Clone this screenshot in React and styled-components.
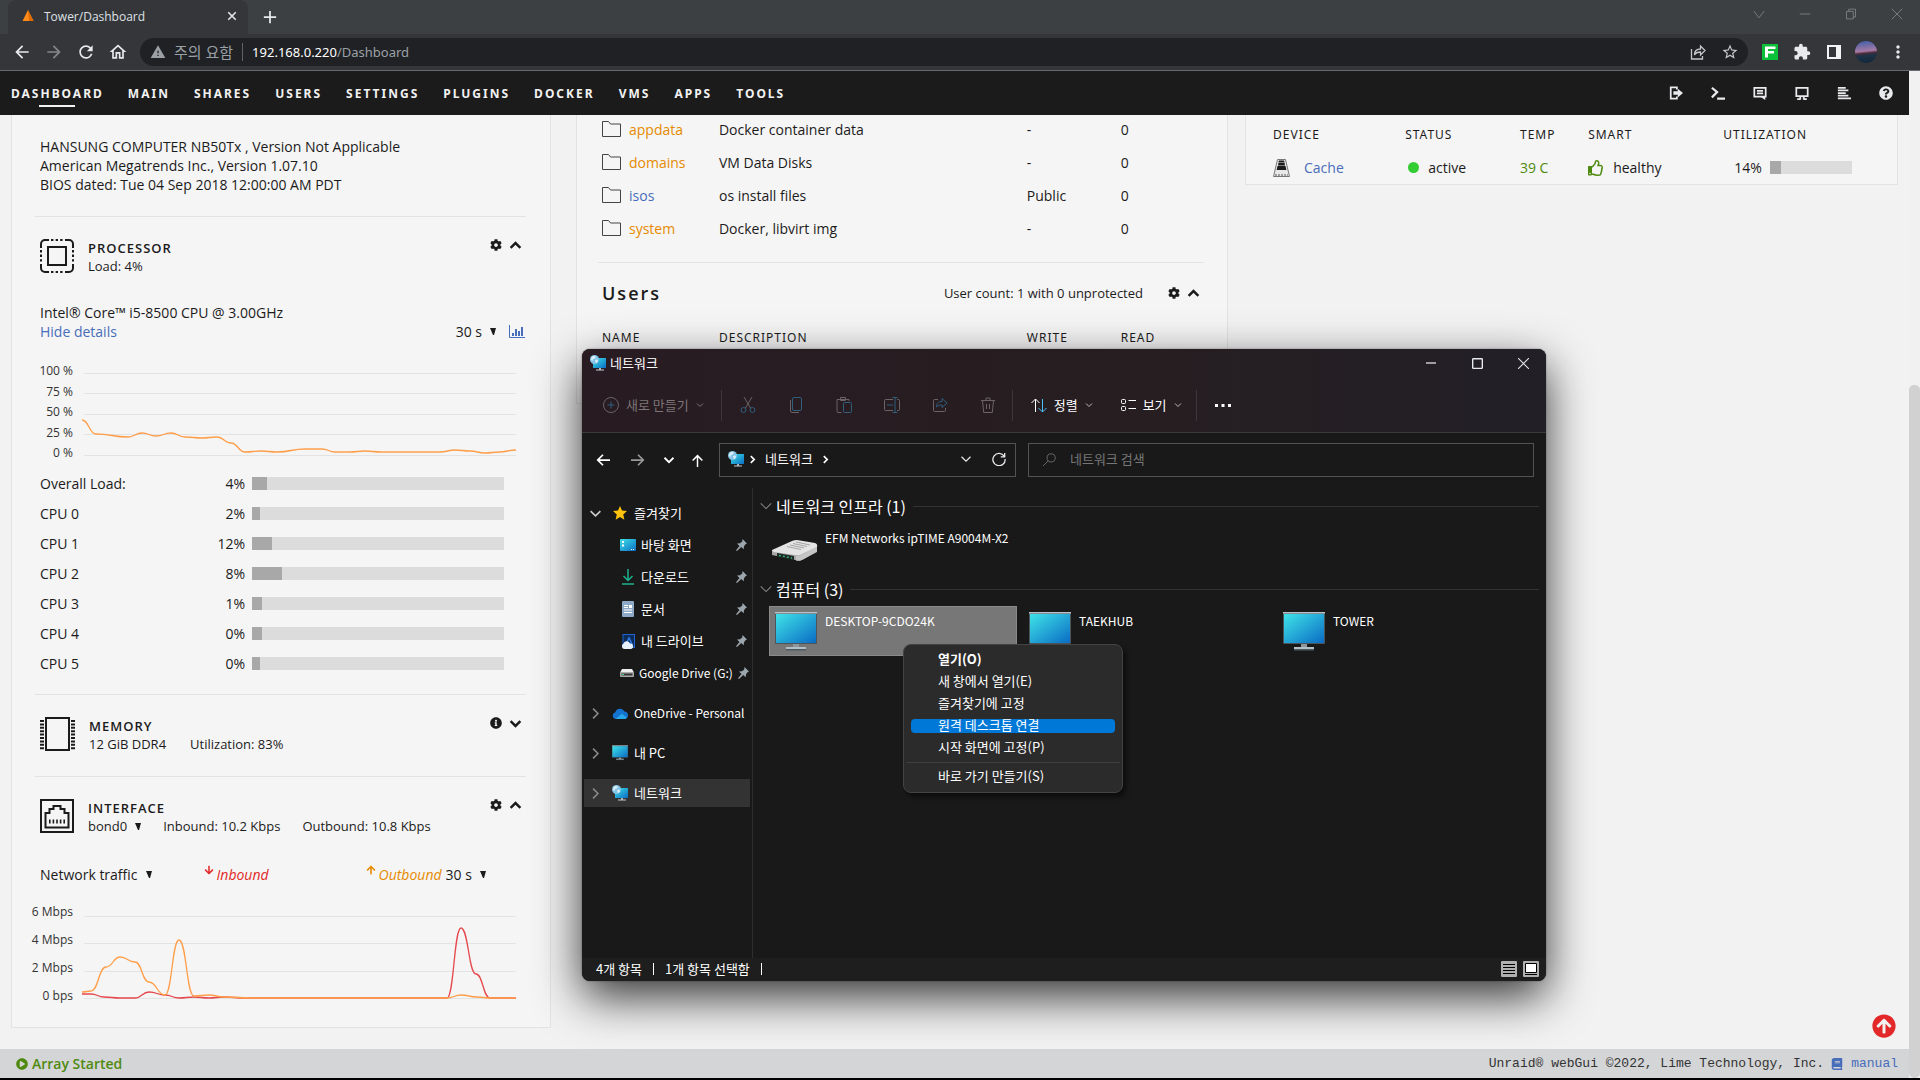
import React, { useState } from 'react'
import styled, { createGlobalStyle, css } from 'styled-components'
import { MdArrowBack, MdArrowForward, MdRefresh, MdOutlineHome, MdWarning, MdStarBorder, MdExtension, MdMoreVert } from 'react-icons/md'
import { FaPlayCircle, FaArrowUp, FaArrowDown, FaRegThumbsUp, FaInfoCircle, FaCog, FaQuestionCircle, FaBook, FaArrowCircleUp } from 'react-icons/fa'

const korean = '"Noto Sans CJK KR", "Noto Sans", sans-serif'

const GlobalStyle = createGlobalStyle`
  * {
    box-sizing: border-box;
  }
  body {
    margin: 0;
    background: #f2f2f2;
    font-family: "Open Sans", "Noto Sans CJK KR", sans-serif;
    font-size: 14px;
    color: #1c1b1b;
  }
  button, input, select {
    font: inherit;
    color: inherit;
    background: none;
    border: none;
    padding: 0;
    margin: 0;
  }
  a {
    color: #486dba;
    text-decoration: none;
  }
  svg {
    display: block;
    flex: none;
  }
`

/* ---------- browser ---------- */

const Browser = styled.div`
  position: relative;
  display: flex;
  flex-direction: column;
  height: 100vh;
  overflow: hidden;
  border-bottom: 2px solid #000;
`
const TabStrip = styled.div`
  display: flex;
  height: 34px;
  padding-left: 8px;
  background: #3c4043;
`
const Tab = styled.div`
  display: flex;
  align-items: center;
  gap: 9px;
  width: 240px;
  padding: 0 10px 2px 13px;
  border-radius: 8px 8px 0 0;
  background: #35363a;
  color: #dfe1e5;
  font: 12px "Open Sans", "Noto Sans", sans-serif;
`
const TabTitle = styled.span`
  flex: 1;
`
const PlainButton = styled.button`
  display: flex;
  align-items: center;
  justify-content: center;
  width: ${(props) => props.$width || 16}px;
  color: ${(props) => props.$color || '#e8eaed'};
`
const WindowButtons = styled.div`
  display: flex;
  height: 28px;
  margin-left: auto;
`
const Toolbar = styled.div`
  display: flex;
  align-items: center;
  height: 37px;
  padding: 0 6px;
  background: #35363a;
  border-bottom: 1px solid #68696d;
`
const Omnibox = styled.div`
  display: flex;
  align-items: center;
  flex: 1;
  height: 28px;
  margin: 0 6px;
  padding: 0 2px 0 10px;
  border-radius: 14px;
  background: #202124;
  color: #9aa0a6;
`
const SiteWarning = styled.span`
  margin-left: 8px;
  padding-right: 9px;
  border-right: 1px solid #5f6368;
  font-size: 15px;
  line-height: 18px;
`
const Url = styled.span`
  flex: 1;
  margin-left: 9px;
  font-family: "Noto Sans", sans-serif;
  font-size: 13px;
  b {
    font-weight: 400;
    color: #fff;
  }
`

/* ---------- unraid page ---------- */

const Viewport = styled.div`
  position: relative;
  display: flex;
  flex: 1;
  min-height: 0;
`
const Page = styled.div`
  display: flex;
  flex-direction: column;
  flex: 1;
  min-width: 0;
`
const ScrollTrack = styled.div`
  width: 11px;
  padding-top: 314px;
  background: #f1f1f1;
`
const ScrollThumb = styled.div`
  height: 100%;
  border-radius: 5px;
  background: #d1d1d1;
`
const NavBar = styled.nav`
  display: flex;
  align-items: center;
  gap: 24px;
  height: 44px;
  flex: none;
  padding: 0 2px 0 11px;
  background: #1c1b1b;
`
const NavLink = styled.a`
  position: relative;
  color: #f2f2f2;
  font-family: "Noto Sans", sans-serif;
  font-size: 12px;
  font-weight: 700;
  letter-spacing: 2px;
  ${(props) => props.$active && css`
    &::after {
      content: "";
      position: absolute;
      left: 50%;
      bottom: -5px;
      width: 36px;
      height: 2px;
      margin-left: -18px;
      background: #f2f2f2;
    }
  `}
`
const NavTools = styled.div`
  display: flex;
  margin-left: auto;
`
const Columns = styled.main`
  display: grid;
  grid-template-columns: 548fr 652fr 653fr;
  gap: 17px;
  align-items: start;
  flex: 1;
  min-height: 0;
  padding: 0 11px;
  overflow: hidden;
`
const Card = styled.section`
  border: 1px solid #e3e3e3;
  border-top: none;
  background: #f5f5f5;
`
const SystemCard = styled(Card)`
  margin-right: 8px;
  padding: 0 24px 0 23px;
`
const SharesCard = styled(Card)`
  padding: 0 23px 56px 21px;
`
const CacheCard = styled(Card)`
  padding: 9px 26px 0 27px;
`
const Section = styled.div`
  padding: 22px 0 ${(props) => props.$bottom || 22}px;
  border-bottom: 1px solid #e3e3e3;
  &:last-child {
    border-bottom: none;
  }
`
const Line = styled.div`
  display: flex;
  align-items: center;
  height: 19px;
  padding: 0 1px 0 5px;
`
const SectionHead = styled.header`
  display: flex;
  gap: 14px;
  padding: 0 0 0 5px;
`
const HeadText = styled.div`
  flex: 1;
  line-height: 18px;
`
const HeadTitle = styled.h3`
  margin: 0;
  font-size: 13px;
  font-weight: 600;
  letter-spacing: 1px;
  text-transform: uppercase;
`
const HeadInfo = styled.div`
  display: flex;
  gap: ${(props) => props.$gap || 0}px;
  font-size: 13px;
`
const HeadTools = styled.div`
  display: flex;
  gap: 2px;
  height: 12px;
  padding-right: 2px;
`
const Spacer = styled.div`
  height: ${(props) => props.$size}px;
`
const PickerLabel = styled.label`
  display: flex;
  align-items: center;
  gap: 8px;
  select {
    appearance: none;
    field-sizing: content;
  }
`
const PeriodPicker = styled.span`
  margin-right: 13px;
`
const DetailsLink = styled.a`
  flex: 1;
`
const ChartBox = styled.div`
  display: flex;
  gap: 9px;
  height: ${(props) => props.$height}px;
  margin-right: 10px;
`
const AxisLabels = styled.div`
  display: flex;
  flex-direction: column;
  justify-content: space-between;
  align-items: flex-end;
  width: 38px;
  font-size: 12px;
  line-height: 20px;
  color: #333;
  white-space: nowrap;
`
const ChartSvg = styled.svg`
  flex: 1;
  min-width: 0;
  height: 100%;
  overflow: visible;
`
const LoadRow = styled.div`
  display: flex;
  align-items: center;
  height: 30px;
  padding: 0 22px 0 5px;
`
const LoadName = styled.span`
  width: 105px;
`
const LoadValue = styled.span`
  width: 100px;
  margin-right: 7px;
  text-align: right;
`
const Meter = styled.div`
  flex: 1;
  height: 13px;
  background: #dcdcdc;
`
const MeterFill = styled.div`
  height: 100%;
  background: #a8a8a8;
`
const TrafficLegend = styled.em`
  display: flex;
  gap: 3px;
  margin-left: ${(props) => props.$left}px;
  margin-right: 4px;
  color: ${(props) => props.$color};
`
const Table = styled.table`
  width: 100%;
  margin-top: ${(props) => props.$top || 0}px;
  border-collapse: collapse;
  table-layout: fixed;
  th, td {
    padding: 0 0 0 ${(props) => props.$indent || 0}px;
    height: ${(props) => props.$rowHeight}px;
    text-align: left;
    font-weight: 400;
  }
  th {
    height: 20px;
    font-family: "Noto Sans", sans-serif;
    font-size: 12px;
    letter-spacing: 1px;
  }
`
const ShareName = styled.div`
  display: flex;
  align-items: center;
  gap: 8px;
`
const ShareLink = styled.a`
  color: ${(props) => (props.$public ? '#486dba' : '#e68a00')};
`
const UsersHead = styled.header`
  display: flex;
  align-items: center;
  height: 26px;
  margin-top: 17px;
  h2 {
    flex: 1;
    margin: 0;
    padding-left: 4px;
    font-size: 18px;
    font-weight: 600;
    letter-spacing: 2px;
  }
`
const UsersCount = styled.span`
  margin-right: 22px;
  font-size: 13px;
`
const Rule = styled.hr`
  height: 1px;
  margin: 17px 0 0;
  border: none;
  background: #e3e3e3;
`
const Cell = styled.div`
  display: flex;
  align-items: center;
  gap: ${(props) => props.$gap || 9}px;
  padding: 7px 0 0 ${(props) => props.$left || 0}px;
  color: ${(props) => props.$color || 'inherit'};
  white-space: nowrap;
`
const Dot = styled.span`
  width: 11px;
  height: 11px;
  margin-left: 3px;
  border-radius: 50%;
  background: #33cc33;
`
const CacheMeter = styled(Meter)`
  flex: none;
  width: 82px;
`
const Footer = styled.footer`
  display: flex;
  align-items: center;
  height: 29px;
  flex: none;
  padding: 0 11px 0 16px;
  background: #d4d5d6;
`
const ArrayState = styled.strong`
  display: flex;
  align-items: center;
  gap: 4px;
  flex: 1;
  color: #4f8a10;
  font-weight: 600;
`
const Copyright = styled.span`
  display: flex;
  align-items: center;
  gap: 7px;
  color: #333;
  font-family: "Liberation Mono", monospace;
  font-size: 13px;
  a {
    display: flex;
    align-items: center;
    gap: 8px;
  }
`
const BackToTop = styled.a`
  position: absolute;
  right: 24px;
  bottom: 40px;
  color: #e22828;
`

/* ---------- explorer window ---------- */

const Explorer = styled.div`
  position: absolute;
  left: 582px;
  top: 349px;
  display: flex;
  flex-direction: column;
  width: 964px;
  height: 632px;
  border-radius: 8px;
  background: #191919;
  color: #fff;
  font: 13px/18px ${korean};
  box-shadow: 0 0 2px rgba(0, 0, 0, 0.4), 0 16px 46px rgba(0, 0, 0, 0.78);
`
const ExplorerTop = styled.div`
  border-radius: 8px 8px 0 0;
  border-bottom: 1px solid #3a3a3a;
  background: linear-gradient(90deg, #281c22, #261e21 60%, #221f27);
`
const TitleBar = styled.div`
  display: flex;
  align-items: center;
  gap: 4px;
  height: 29px;
  padding: 0 0 1px 8px;
`
const TitleButtons = styled.div`
  display: flex;
  height: 100%;
  margin-left: auto;
`
const CommandBar = styled.div`
  display: flex;
  align-items: center;
  height: 54px;
`
const Command = styled.button`
  display: flex;
  align-items: center;
  gap: 7px;
  padding: 0 ${(props) => props.$right}px 0 ${(props) => props.$left}px;
  color: ${(props) => (props.$dim ? '#7d7577' : '#fff')};
`
const CommandDivider = styled.span`
  width: 1px;
  height: 31px;
  margin-right: 2px;
  background: #3d3538;
`
const LocationBar = styled.div`
  display: flex;
  align-items: center;
  height: 55px;
  padding: 0 12px 1px 4px;
`
const AddressBox = styled.div`
  display: flex;
  align-items: center;
  flex: 299;
  height: 34px;
  margin: 0 12px 0 7px;
  padding: 0 4px 2px 8px;
  border: 1px solid #535353;
`
const Crumb = styled.span`
  margin: 0 8px;
`
const CrumbSpace = styled.span`
  flex: 1;
`
const SearchBox = styled.label`
  display: flex;
  align-items: center;
  gap: 14px;
  flex: 503;
  height: 34px;
  padding: 0 14px 2px;
  border: 1px solid #535353;
  color: #777;
  input {
    flex: 1;
    outline: none;
  }
  input::placeholder {
    color: #777;
  }
`
const ExplorerBody = styled.div`
  display: flex;
  flex: 1;
  min-height: 0;
`
const Tree = styled.aside`
  width: 171px;
  padding: 11px 2px 0;
  border-right: 1px solid #2e2e2e;
`
const TreeItem = styled.button`
  display: flex;
  align-items: center;
  gap: ${(props) => (props.$child ? 5 : 6)}px;
  width: 100%;
  height: 28px;
  margin-bottom: ${(props) => (props.$spaced ? 12 : 4)}px;
  padding: 0 3px 0 ${(props) => (props.$child ? 36 : 5)}px;
  background: ${(props) => (props.$selected ? '#333' : 'none')};
  white-space: nowrap;
`
const TreeIcon = styled.span`
  display: flex;
  justify-content: center;
  width: 16px;
`
const TreeArrow = styled.span`
  display: flex;
  width: 14px;
  margin-right: 3px;
`
const TreeText = styled.span`
  flex: 1;
  text-align: left;
  font-size: ${(props) => (props.$latin ? 12 : 13)}px;
`
const Files = styled.div`
  flex: 1;
  padding: 7px 7px 0 6px;
`
const GroupHead = styled.h2`
  display: flex;
  align-items: center;
  gap: 3px;
  height: 22px;
  margin: 0 0 6px;
  font-size: 16px;
  font-weight: 400;
  &::after {
    content: "";
    flex: 1;
    height: 1px;
    margin-left: 4px;
    background: #333;
  }
`
const Tiles = styled.div`
  display: grid;
  grid-template-columns: repeat(auto-fill, 248px);
  gap: 6px;
  margin: 0 0 5px 10px;
`
const Tile = styled.button`
  display: flex;
  align-items: flex-start;
  gap: 8px;
  height: 50px;
  padding: 5px;
  border: 1px solid ${(props) => (props.$selected ? '#8a8a8a' : 'transparent')};
  background: ${(props) => (props.$selected ? '#777' : 'none')};
  font-size: 12px;
  white-space: nowrap;
`
const StatusBar = styled.div`
  display: flex;
  align-items: center;
  height: 23px;
  padding: 0 7px 1px 14px;
  border-radius: 0 0 8px 8px;
  background: #1e1e1e;
`
const StatusText = styled.span`
  margin-right: 11px;
  padding-right: 11px;
  border-right: 1px solid #fff;
  line-height: 12px;
`
const ViewButtons = styled.div`
  display: flex;
  gap: 6px;
  margin-left: auto;
`
const ContextMenu = styled.div`
  position: absolute;
  left: 321px;
  top: 295px;
  display: flex;
  flex-direction: column;
  gap: 8px;
  width: 220px;
  padding: 8px 2px;
  border: 1px solid #434343;
  border-radius: 8px;
  background: #2b2b2b;
  box-shadow: 3px 4px 5px rgba(0, 0, 0, 0.5);
  hr {
    width: 100%;
    height: 1px;
    margin: -1px 0;
    border: none;
    background: #404040;
  }
`
const MenuItem = styled.button`
  height: 14px;
  margin: 0 5px;
  padding: 0 0 2px 27px;
  border-radius: 4px;
  background: ${(props) => (props.$active ? '#0078d7' : 'none')};
  font-weight: ${(props) => (props.$bold ? 700 : 400)};
  line-height: 12px;
  text-align: left;
`

/* ---------- icons ---------- */

const Stroke = ({ size = 16, width = 1, children, ...rest }) => (
  <svg width={size} height={size} viewBox="0 0 16 16" fill="none" stroke="currentColor" strokeWidth={width} {...rest}>
    {children}
  </svg>
)
const Chevron = ({ size = 8, turn = 0, width = 2, ...rest }) => (
  <Stroke size={size} width={width} {...rest}>
    <path d="M2 5l6 6 6-6" transform={`rotate(${turn} 8 8)`} />
  </Stroke>
)
const Triangle = () => (
  <svg width="6" height="7" viewBox="0 0 6 7"><path d="M0 0h6L4 7H3z" fill="#1c1b1b" /></svg>
)
const CpuIcon = () => (
  <svg width="34" height="34" viewBox="0 0 34 34" fill="none" stroke="#1c1b1b" strokeWidth="2">
    <path d="M1 9V5a4 4 0 0 1 4-4h4M25 1h4a4 4 0 0 1 4 4v4M33 25v4a4 4 0 0 1-4 4h-4M9 33H5a4 4 0 0 1-4-4v-4" />
    <path d="M11 1h12M11 33h12M1 11v12M33 11v12" strokeDasharray="2.4 2.2" />
    <rect x="8" y="8" width="18" height="18" />
  </svg>
)
const MemoryIcon = () => (
  <svg width="35" height="34" viewBox="0 0 35 34" fill="none" stroke="#1c1b1b" strokeWidth="2">
    <rect x="6" y="1" width="23" height="32" />
    <path d="M2 3v30M33 3v30" strokeWidth="4" strokeDasharray="2 1.4" />
  </svg>
)
const PortIcon = () => (
  <svg width="34" height="34" viewBox="0 0 34 34" fill="none" stroke="#1c1b1b" strokeWidth="2">
    <rect x="1" y="1" width="32" height="32" />
    <path d="M5.5 28.500V14h4v-4h4V7h7v3h4v4h4v14.500z" />
    <path d="M9 22.500h16" strokeWidth="4" strokeDasharray="1.600 2" />
  </svg>
)
const ChartIcon = () => (
  <svg width="16" height="13" viewBox="0 0 16 13" fill="none" stroke="#486dba">
    <path d="M.5 0v12.500H16" />
    <path d="M4 11V8M7 11V4M10 11V6M13 11V2" strokeWidth="2" />
  </svg>
)
const FolderIcon = () => (
  <svg width="19" height="17" viewBox="0 0 19 17" fill="none" stroke="#444">
    <path d="M.5 15.500V.5h6l2 2.500h10v12.500z" />
  </svg>
)
const DriveIcon = () => (
  <svg width="17" height="18" viewBox="0 0 17 18">
    <path d="M4.500.5h8l4 17H.5z" fill="#e8e8e8" stroke="#777" />
    <path d="M6 1.500h5l.5 1.500h-6zM5.500 3.500h6l.5 3H5zM4.500 7h8l.9 4H3.600z" fill="#1c1b1b" />
    <path d="M2 16h13" stroke="#555" strokeDasharray="2 1" />
  </svg>
)
const MonitorIcon = ({ width = 42, height = 40 }) => (
  <svg width={width} height={height} viewBox="0 0 42 40">
    <defs>
      <linearGradient id="screen" x1="0" y1="0" x2="1" y2="1">
        <stop offset="0" stopColor="#3fe3e8" />
        <stop offset="1" stopColor="#0a6cc4" />
      </linearGradient>
    </defs>
    <path d="M18 32h6v4h-6z" fill="#8d979e" />
    <path d="M11 35h20v3H11z" fill="#b5bfc6" />
    <path d="M11 37h20v1.500H11z" fill="#4e5a62" />
    <rect x="0" y="0" width="42" height="32" rx="1" fill="#4d555c" />
    <path d="M0 0h42v1.500H0z" fill="#b9c2c9" />
    <rect x="1" y="2" width="40" height="29" fill="url(#screen)" />
  </svg>
)
const NetworkIcon = () => (
  <svg width="16" height="16" viewBox="0 0 16 16">
    <path d="M9 12h2v3H9z" fill="#a6b1b9" />
    <path d="M6 14.500h8v1H6z" fill="#c5cdd3" />
    <rect x="3" y="3" width="13" height="10" fill="url(#screen)" />
    <circle cx="4.500" cy="4.500" r="4.500" fill="#86c4e6" />
    <path d="M1.500 2C3 .5 5 .8 6 1.800L4.800 3.500 3 4 2.500 6 1 5zM5 5l2.500-.5.5 2-2 1.800z" fill="#d8f0fa" />
  </svg>
)
const RouterIcon = () => (
  <svg width="42" height="38" viewBox="0 0 42 38" overflow="visible">
    <g transform="translate(-3 11)">
      <path d="M0 10v5l28 6 17-9V7z" fill="#a9a9a9" />
      <path d="M0 10L20 1q2-1 5-1l18 3q3 1 2 4L30 14q-3 2-7 1L2 12q-2-1-2-2z" fill="#e4e4e4" />
      <path d="M18 5l14 3M21 3.500l14 3M24 2l14 3M15 6.500l14 3" stroke="#a5a5a5" />
      <path d="M5 13l17 3v4L5 17z" fill="#1b2a26" />
      <path d="M7 15.500l13 2.500" stroke="#3fae72" strokeWidth="1.500" strokeDasharray="2 2" />
      <path d="M24 20.500V16q4 0 7-2l14-7v4.500L31 19.500q-3 1.500-7 1z" fill="#c4c4c4" />
    </g>
  </svg>
)
const PinIcon = () => (
  <svg width="11" height="12" viewBox="0 0 11 12" fill="#9aa5ad">
    <path d="M6.500 0L11 4.500l-1.500.8-1.500 2-.3 3L5.200 8 1 12l-1-.8L3.500 7 1 4.500l3-.3 2.200-1.700z" />
  </svg>
)
const treeIcons = {
  star: <svg width="14" height="14" viewBox="0 0 16 16"><path d="M8 0l2.300 5.200 5.700.6-4.300 3.800 1.300 6L8 12.600 3 15.600l1.300-6L0 5.800l5.700-.6z" fill="#ffc20e" /></svg>,
  desktop: <svg width="16" height="12" viewBox="0 0 16 12"><rect width="16" height="12" rx="1" fill="url(#screen)" /><path d="M2 2h2v2H2zM2 5.500h2v2H2zM11 10h1v1h-1zM13 10h1v1h-1z" fill="#fff" /></svg>,
  download: <svg width="12" height="16" viewBox="0 0 12 16" fill="none" stroke="#1cb28c" strokeWidth="1.500"><path d="M6 0v11.500M1.500 7L6 11.500 10.500 7M0 15h12" /></svg>,
  document: <svg width="12" height="16" viewBox="0 0 12 16"><rect width="12" height="16" rx="1" fill="#8ea9c6" /><path d="M2 4h4v1H2zM2 6h4v1H2zM7 4h3v3H7zM2 8.500h8v1H2zM2 11h8v1H2z" fill="#fff" /></svg>,
  drive: <svg width="14" height="15" viewBox="0 0 14 15"><rect x="2" y=".5" width="11.500" height="13" fill="#0d2b57" stroke="#1f63d0" /><path d="M5 10l3-6 3 6z" fill="none" stroke="#2f7be8" strokeWidth="1.500" /><path d="M3 15a3 3 0 0 1-.5-5.500 3.500 3.500 0 0 1 6.500 0A2.800 2.800 0 0 1 10 15z" fill="#e7f1ff" /></svg>,
  disk: <svg width="14" height="8" viewBox="0 0 14 8"><path d="M2 0h10l2 3.500H0z" fill="#eee" /><rect y="3" width="14" height="5" rx="1" fill="#aaa" /><path d="M1.500 4.500h11v2h-11z" fill="#333" /><path d="M2 5h2v1H2z" fill="#3ddc84" /></svg>,
  cloud: <svg width="16" height="11" viewBox="0 0 16 11"><path d="M3.500 11a3.500 3.500 0 0 1-.2-6.800 5 5 0 0 1 9.200-.7A3.800 3.800 0 0 1 13 11z" fill="#1472d0" /><path d="M3.500 11L10 5.800l4.800 3.900A3.500 3.500 0 0 1 13 11z" fill="#28a8ea" /></svg>,
  pc: <MonitorIcon width={16} height={16} />,
  network: <NetworkIcon />,
}

/* ---------- charts ---------- */

const cpuLoad = [[0, 59], [14, 73], [46, 76], [60, 72], [74, 75], [89, 72], [103, 76], [120, 77], [135, 76], [149, 82], [163, 91], [179, 90], [195, 91], [223, 88], [240, 88], [253, 91], [268, 91], [283, 90], [299, 91], [358, 91], [373, 89], [388, 90], [403, 92], [417, 91], [434, 89]]
const outbound = [[0, 90], [9, 89], [24, 65], [38, 55], [53, 60], [67, 80], [83, 93], [97, 38], [112, 94], [127, 93], [142, 95], [170, 96], [365, 96], [379, 93], [395, 95], [408, 96], [434, 96]]
const inbound = [[0, 92], [9, 92], [22, 95], [38, 96], [53, 96], [67, 90], [83, 93], [97, 96], [112, 95], [127, 96], [142, 95], [163, 96], [365, 96], [379, 26], [394, 72], [408, 96], [434, 96]]

// every point gets a flat tangent
const smooth = (points) =>
  points.map(([x, y], i) => {
    if (i === 0) return `M${x} ${y}`
    const [px, py] = points[i - 1]
    const mid = (x + px) / 2
    return `C${mid} ${py} ${mid} ${y} ${x} ${y}`
  }).join('')

const Chart = ({ height, labels, lines, series }) => (
  <ChartBox $height={height}>
    <AxisLabels>{labels.map((label) => <span key={label}>{label}</span>)}</AxisLabels>
    <ChartSvg viewBox={`0 0 434 ${height}`} preserveAspectRatio="none" fill="none">
      {lines.map((y) => <path key={y} d={`M2 ${y + 0.5}H434`} stroke="#e3e3e3" />)}
      {series.map((item) => <path key={item.color} d={smooth(item.points)} stroke={item.color} strokeWidth="1.3" />)}
    </ChartSvg>
  </ChartBox>
)

const Picker = ({ name, value, options }) => (
  <PickerLabel>
    <select aria-label={name} defaultValue={value}>
      {options.map((option) => <option key={option}>{option}</option>)}
    </select>
    <Triangle />
  </PickerLabel>
)

const Tools = ({ info, open = true }) => {
  const [expanded, setExpanded] = useState(open)
  return (
    <HeadTools>
      <PlainButton $width={17} $color="#1c1b1b" aria-label="Settings">{info ? <FaInfoCircle size={12} /> : <FaCog size={12} />}</PlainButton>
      <PlainButton $width={18} $color="#1c1b1b" aria-label="Toggle" onClick={() => setExpanded(!expanded)}>
        <Chevron size={13} turn={expanded ? 180 : 0} width={3} />
      </PlainButton>
    </HeadTools>
  )
}

/* ---------- data ---------- */

const menu = ['DASHBOARD', 'MAIN', 'SHARES', 'USERS', 'SETTINGS', 'PLUGINS', 'DOCKER', 'VMS', 'APPS', 'TOOLS']

const loads = [
  { name: 'Overall Load:', value: '4%', bar: 6 },
  { name: 'CPU 0', value: '2%', bar: 3 },
  { name: 'CPU 1', value: '12%', bar: 8 },
  { name: 'CPU 2', value: '8%', bar: 12 },
  { name: 'CPU 3', value: '1%', bar: 4 },
  { name: 'CPU 4', value: '0%', bar: 4 },
  { name: 'CPU 5', value: '0%', bar: 3 },
]

const shares = [
  { name: 'appdata', text: 'Docker container data', access: '-' },
  { name: 'domains', text: 'VM Data Disks', access: '-' },
  { name: 'isos', text: 'os install files', access: 'Public' },
  { name: 'system', text: 'Docker, libvirt img', access: '-' },
]

const tree = [
  { icon: 'star', text: '즐겨찾기', open: true },
  { icon: 'desktop', text: '바탕 화면', child: true },
  { icon: 'download', text: '다운로드', child: true },
  { icon: 'document', text: '문서', child: true },
  { icon: 'drive', text: '내 드라이브', child: true },
  { icon: 'disk', text: 'Google Drive (G:)', child: true, latin: true, spaced: true },
  { icon: 'cloud', text: 'OneDrive - Personal', latin: true, spaced: true },
  { icon: 'pc', text: '내 PC', spaced: true },
  { icon: 'network', text: '네트워크', selected: true },
]

/* ---------- parts ---------- */

const ChromeBars = () => (
  <>
    <TabStrip>
      <Tab>
        <svg width="14" height="12" viewBox="0 0 14 12"><path d="M7 0l5.500 11h-11z" fill="#ff8c1a" /><path d="M7 0l5.500 11H8z" fill="#e06c00" /></svg>
        <TabTitle>Tower/Dashboard</TabTitle>
        <PlainButton $width={12} aria-label="Close tab"><Stroke size={12} width={2}><path d="M3 3l10 10M13 3L3 13" /></Stroke></PlainButton>
      </Tab>
      <PlainButton $width={44} aria-label="New tab"><Stroke size={14} width={2}><path d="M8 1v14M1 8h14" /></Stroke></PlainButton>
      <WindowButtons>
        <PlainButton $width={46} $color="#8b8e91" aria-label="Search tabs"><Stroke size={12}><path d="M1 4l7 9 7-9" /></Stroke></PlainButton>
        <PlainButton $width={46} $color="#8b8e91" aria-label="Minimize"><Stroke size={12}><path d="M1 8h14" /></Stroke></PlainButton>
        <PlainButton $width={46} $color="#8b8e91" aria-label="Restore"><Stroke size={12}><path d="M2 4.500h9v10H2zM5 4V1.500h9V12h-3" /></Stroke></PlainButton>
        <PlainButton $width={46} $color="#8b8e91" aria-label="Close"><Stroke size={12}><path d="M1 1l14 14M15 1L1 15" /></Stroke></PlainButton>
      </WindowButtons>
    </TabStrip>
    <Toolbar>
      <PlainButton $width={32} aria-label="Back"><MdArrowBack size={20} /></PlainButton>
      <PlainButton $width={32} $color="#85878a" aria-label="Forward"><MdArrowForward size={20} /></PlainButton>
      <PlainButton $width={32} aria-label="Reload"><MdRefresh size={20} /></PlainButton>
      <PlainButton $width={32} aria-label="Home"><MdOutlineHome size={20} /></PlainButton>
      <Omnibox>
        <MdWarning size={16} />
        <SiteWarning>주의 요함</SiteWarning>
        <Url><b>192.168.0.220</b>/Dashboard</Url>
        <PlainButton $width={32} $color="#c4c7ca" aria-label="Share"><Stroke width={1.3}><path d="M1.500 5v10h11v-3M4.500 11c0-4 2-6 6-6V2l4.500 4.500L10.500 11V8c-3 0-5 1-6 3z" /></Stroke></PlainButton>
        <PlainButton $width={32} $color="#c4c7ca" aria-label="Bookmark"><MdStarBorder size={18} /></PlainButton>
      </Omnibox>
      <PlainButton $width={32} aria-label="F extension">
        <svg width="16" height="16" viewBox="0 0 16 16"><path d="M0 0h16v16H0z" fill="#0bc139" /><path d="M3 2.500h10.500v2.500H6v2h6v2.500H6v4H3z" fill="#fff" /></svg>
      </PlainButton>
      <PlainButton $width={32} aria-label="Extensions"><MdExtension size={18} /></PlainButton>
      <PlainButton $width={32} aria-label="Side panel"><svg width="14" height="14" viewBox="0 0 14 14"><path d="M0 0h14v14H0zM2 2v10h7V2z" fill="#f1f3f4" fillRule="evenodd" /></svg></PlainButton>
      <PlainButton $width={32} aria-label="Profile">
        <svg width="22" height="22" viewBox="0 0 22 22">
          <defs>
            <linearGradient id="sky" x1="0" y1="0" x2="0.100" y2="1">
              <stop offset="0" stopColor="#3b5ea8" /><stop offset=".5" stopColor="#a77aa5" /><stop offset=".6" stopColor="#4a2b3c" /><stop offset=".7" stopColor="#1d3247" /><stop offset="1" stopColor="#16293c" />
            </linearGradient>
          </defs>
          <circle cx="11" cy="11" r="11" fill="url(#sky)" />
        </svg>
      </PlainButton>
      <PlainButton $width={32} aria-label="Menu"><MdMoreVert size={20} /></PlainButton>
    </Toolbar>
  </>
)

const NavIcons = () => (
  <NavTools>
    <PlainButton $width={42} aria-label="Logout"><Stroke size={14} width={2}><path d="M9 4V1.500H2v13h7V12" /><path d="M5 6h5V3l6 5-6 5v-3H5z" fill="currentColor" stroke="none" /></Stroke></PlainButton>
    <PlainButton $width={42} aria-label="Terminal"><Stroke size={14} width={2}><path d="M1 2l6 5-6 6M7 14.500h9" strokeWidth="2.500" /></Stroke></PlainButton>
    <PlainButton $width={42} aria-label="Feedback"><Stroke size={14} width={2}><path d="M1.500 2h13v10h-13zM4.500 5.500h7M4.500 8.500h7" /><path d="M8 12h6v4z" fill="currentColor" stroke="none" /></Stroke></PlainButton>
    <PlainButton $width={42} aria-label="Info"><Stroke size={14} width={2}><path d="M1.500 2h13v9.500h-13zM6 11v4M10 11v4M2.500 15h4M9.500 15h4" /></Stroke></PlainButton>
    <PlainButton $width={42} aria-label="Log"><Stroke size={14} width={2}><path d="M1 2h9M1 5h12M1 8h9M1 11h12M1 14h15" /></Stroke></PlainButton>
    <PlainButton $width={42} aria-label="Help"><FaQuestionCircle size={14} /></PlainButton>
  </NavTools>
)

const System = () => (
  <SystemCard>
    <Section $bottom={22}>
      <Line>HANSUNG COMPUTER NB50Tx , Version Not Applicable</Line>
      <Line>American Megatrends Inc., Version 1.07.10</Line>
      <Line>BIOS dated: Tue 04 Sep 2018 12:00:00 AM PDT</Line>
    </Section>
    <Section $bottom={16}>
      <SectionHead>
        <CpuIcon />
        <HeadText>
          <HeadTitle>Processor</HeadTitle>
          <HeadInfo>Load: 4%</HeadInfo>
        </HeadText>
        <Tools />
      </SectionHead>
      <Spacer $size={28} />
      <Line>Intel® Core™ i5-8500 CPU @ 3.00GHz</Line>
      <Line>
        <DetailsLink href="#details">Hide details</DetailsLink>
        <PeriodPicker><Picker name="CPU chart period" value="30 s" options={['30 s', '1 m', '2 m']} /></PeriodPicker>
        <ChartIcon />
      </Line>
      <Spacer $size={20} />
      <Chart height={102} labels={['100 %', '75 %', '50 %', '25 %', '0 %']} lines={[12, 32, 53, 73, 94]} series={[{ color: '#ff9e4a', points: cpuLoad }]} />
      <Spacer $size={5} />
      {loads.map((load) => (
        <LoadRow key={load.name}>
          <LoadName>{load.name}</LoadName>
          <LoadValue>{load.value}</LoadValue>
          <Meter><MeterFill style={{ width: `${load.bar}%` }} /></Meter>
        </LoadRow>
      ))}
    </Section>
    <Section $bottom={23}>
      <SectionHead>
        <MemoryIcon />
        <HeadText>
          <HeadTitle>Memory</HeadTitle>
          <HeadInfo $gap={24}><span>12 GiB DDR4</span><span>Utilization: 83%</span></HeadInfo>
        </HeadText>
        <Tools info open={false} />
      </SectionHead>
    </Section>
    <Section $bottom={21}>
      <SectionHead>
        <PortIcon />
        <HeadText>
          <HeadTitle>Interface</HeadTitle>
          <HeadInfo $gap={22}>
            <Picker name="Interface" value="bond0" options={['bond0', 'eth0']} />
            <span>Inbound: 10.2 Kbps</span>
            <span>Outbound: 10.8 Kbps</span>
          </HeadInfo>
        </HeadText>
        <Tools />
      </SectionHead>
      <Spacer $size={30} />
      <Line>
        <Picker name="Interface view" value="Network traffic" options={['Network traffic', 'Errors']} />
        <TrafficLegend $left={52} $color="#e22828"><FaArrowDown size={10} />Inbound</TrafficLegend>
        <TrafficLegend $left={93} $color="#e68a00"><FaArrowUp size={10} />Outbound</TrafficLegend>
        <Picker name="Network chart period" value="30 s" options={['30 s', '1 m', '2 m']} />
      </Line>
      <Spacer $size={18} />
      <Chart height={104} labels={['6 Mbps', '4 Mbps', '2 Mbps', '0 bps']} lines={[14, 41, 69, 96]} series={[{ color: '#e5484d', points: inbound }, { color: '#ff9e4a', points: outbound }]} />
    </Section>
  </SystemCard>
)

const ShareColumns = () => (
  <colgroup><col width="19.3%" /><col width="50.8%" /><col width="15.5%" /><col /></colgroup>
)

const Shares = () => (
  <SharesCard>
    <Table $top={-2} $rowHeight={33} $indent={4}>
      <ShareColumns />
      <tbody>
        {shares.map((share) => (
          <tr key={share.name}>
            <td><ShareName><FolderIcon /><ShareLink href={`#${share.name}`} $public={share.access === 'Public'}>{share.name}</ShareLink></ShareName></td>
            <td>{share.text}</td>
            <td>{share.access}</td>
            <td>0</td>
          </tr>
        ))}
      </tbody>
    </Table>
    <Rule />
    <UsersHead>
      <h2>Users</h2>
      <UsersCount>User count: 1 with 0 unprotected</UsersCount>
      <Tools />
    </UsersHead>
    <Table $top={21} $rowHeight={33} $indent={4}>
      <ShareColumns />
      <thead>
        <tr><th>NAME</th><th>DESCRIPTION</th><th>WRITE</th><th>READ</th></tr>
      </thead>
    </Table>
  </SharesCard>
)

const Cache = () => (
  <CacheCard>
    <Table $rowHeight={40}>
      <colgroup><col width="22.1%" /><col width="19.2%" /><col width="11.4%" /><col width="22.6%" /><col /></colgroup>
      <thead>
        <tr><th>DEVICE</th><th>STATUS</th><th>TEMP</th><th>SMART</th><th>UTILIZATION</th></tr>
      </thead>
      <tbody>
        <tr>
          <td><Cell $gap={14}><DriveIcon /><a href="#cache">Cache</a></Cell></td>
          <td><Cell><Dot />active</Cell></td>
          <td><Cell $color="#4f8a10">39 C</Cell></td>
          <td><Cell><FaRegThumbsUp size={16} color="#4f8a10" />healthy</Cell></td>
          <td><Cell $gap={8} $left={11}>14%<CacheMeter><MeterFill style={{ width: '14%' }} /></CacheMeter></Cell></td>
        </tr>
      </tbody>
    </Table>
  </CacheCard>
)

const blue = '#2f5f7d'
const grey = '#6b6366'

const ExplorerWindow = () => (
  <Explorer>
    <ExplorerTop>
      <TitleBar>
        <NetworkIcon />네트워크
        <TitleButtons>
          <PlainButton $width={46} aria-label="Minimize"><Stroke size={10} width={2}><path d="M0 8h16" /></Stroke></PlainButton>
          <PlainButton $width={46} aria-label="Maximize"><Stroke size={11} width={2}><rect x="1" y="1" width="14" height="14" rx="1" /></Stroke></PlainButton>
          <PlainButton $width={46} aria-label="Close"><Stroke size={11} width={1.500}><path d="M0 0l16 16M16 0L0 16" /></Stroke></PlainButton>
        </TitleButtons>
      </TitleBar>
      <CommandBar>
        <Command $dim $left={21} $right={17}>
          <Stroke stroke={grey}><circle cx="8" cy="8" r="7.500" /><path d="M8 4.500v7M4.500 8h7" stroke={blue} /></Stroke>
          <span>새로 만들기</span><Chevron />
        </Command>
        <CommandDivider />
        <PlainButton $width={48} aria-label="Cut"><Stroke stroke={grey}><path d="M4 0l6.500 11M12 0L5.500 11" /><circle cx="3.500" cy="13" r="2.500" stroke={blue} /><circle cx="12.500" cy="13" r="2.500" stroke={blue} /></Stroke></PlainButton>
        <PlainButton $width={48} aria-label="Copy"><Stroke stroke={blue}><rect x="4.500" y=".5" width="9" height="13" rx="1.500" /><path d="M2.500 3v11q0 1.500 1.500 1.500h7" stroke={grey} /></Stroke></PlainButton>
        <PlainButton $width={48} aria-label="Paste"><Stroke stroke={grey}><path d="M5.500 15.500H2q-1 0-1-1V2.500h12V4M4.500 3.500v-3h5v3z" /><rect x="7.500" y="5.500" width="8" height="10" rx="1" stroke={blue} /></Stroke></PlainButton>
        <PlainButton $width={48} aria-label="Rename"><Stroke stroke={grey}><path d="M9 13.500H1.500q-1 0-1-1v-9q0-1 1-1H9M13 2.500h1.500q1 0 1 1v9q0 1-1 1H13" /><path d="M8.500.5h5M11 .5v15M8.500 15.500h5M3 8h6" stroke={blue} /></Stroke></PlainButton>
        <PlainButton $width={48} aria-label="Share"><Stroke stroke={grey}><path d="M6 2.500H2.500q-1 0-1 1v10q0 1 1 1h10q1 0 1-1V11" /><path d="M4.500 10c0-4 2-5.500 5.500-5.500v-3L15 6l-5 4.500V8C7.500 8 6 8.500 4.500 10z" stroke={blue} /></Stroke></PlainButton>
        <PlainButton $width={48} aria-label="Delete"><Stroke stroke={grey}><path d="M1 3.500h14M6 3V1h4v2M2.500 3.500l1.200 12h8.600l1.200-12M6.500 7v5M9.500 7v5" /></Stroke></PlainButton>
        <CommandDivider />
        <Command $left={16} $right={11}>
          <Stroke><path d="M4.500 15V2M.5 6l4-4 4 4" /><path d="M11.500 2v13M7.500 11l4 4 4-4" stroke="#4cc2ff" /></Stroke>
          <span>정렬</span><Chevron opacity={0.7} />
        </Command>
        <Command $left={16} $right={14}>
          <Stroke><rect x="1.500" y="2.500" width="4" height="4" rx="1" /><rect x="1.500" y="9.500" width="4" height="4" rx="1" /><path d="M8.500 3.500H16M8.500 11.500H16" /></Stroke>
          <span>보기</span><Chevron opacity={0.7} />
        </Command>
        <CommandDivider />
        <PlainButton $width={48} $color="#fff" aria-label="More"><Stroke><path d="M0 7h3v3H0zM6.500 7h3v3h-3zM13 7h3v3h-3z" fill="currentColor" stroke="none" /></Stroke></PlainButton>
      </CommandBar>
    </ExplorerTop>
    <LocationBar>
      <PlainButton $width={34} $color="#fff" aria-label="Back"><Stroke size={14} width={2}><path d="M16 8H2M8 2L2 8l6 6" /></Stroke></PlainButton>
      <PlainButton $width={36} $color="#999" aria-label="Forward"><Stroke size={14} width={2}><path d="M0 8h14M8 2l6 6-6 6" /></Stroke></PlainButton>
      <PlainButton $width={26} $color="#fff" aria-label="Recent"><Chevron size={12} width={2.400} /></PlainButton>
      <PlainButton $width={30} $color="#fff" aria-label="Up"><Stroke size={13} width={1.800}><path d="M8 16V2M2 8l6-6 6 6" /></Stroke></PlainButton>
      <AddressBox>
        <NetworkIcon />
        <Chevron size={9} turn={-90} width={3} style={{ marginLeft: 4 }} />
        <Crumb>네트워크</Crumb>
        <Chevron size={9} turn={-90} width={3} />
        <CrumbSpace />
        <PlainButton $width={42} aria-label="History"><Chevron size={12} width={1.600} /></PlainButton>
        <PlainButton $width={24} aria-label="Refresh"><Stroke size={14} width={1.500}><path d="M14 5a7 7 0 1 0 1 3M14.500 1v4.500H10" /></Stroke></PlainButton>
      </AddressBox>
      <SearchBox>
        <Stroke size={13}><circle cx="10" cy="6" r="5" /><path d="M6.500 9.500L0 16" /></Stroke>
        <input type="text" placeholder="네트워크 검색" aria-label="네트워크 검색" />
      </SearchBox>
    </LocationBar>
    <ExplorerBody>
      <Tree>
        {tree.map((item) => (
          <TreeItem key={item.text} $child={item.child} $spaced={item.spaced} $selected={item.selected}>
            {!item.child && <TreeArrow><Chevron size={13} turn={item.open ? 0 : -90} color={item.open ? '#ccc' : '#888'} /></TreeArrow>}
            <TreeIcon>{treeIcons[item.icon]}</TreeIcon>
            <TreeText $latin={item.latin}>{item.text}</TreeText>
            {item.child && <PinIcon />}
          </TreeItem>
        ))}
      </Tree>
      <Files>
        <GroupHead><Chevron size={14} width={1.200} color="#888" />네트워크 인프라 (1)</GroupHead>
        <Tiles>
          <Tile><RouterIcon />EFM Networks ipTIME A9004M-X2</Tile>
        </Tiles>
        <GroupHead><Chevron size={14} width={1.200} color="#888" />컴퓨터 (3)</GroupHead>
        <Tiles>
          <Tile $selected><MonitorIcon />DESKTOP-9CDO24K</Tile>
          <Tile><MonitorIcon />TAEKHUB</Tile>
          <Tile><MonitorIcon />TOWER</Tile>
        </Tiles>
      </Files>
    </ExplorerBody>
    <StatusBar>
      <StatusText>4개 항목</StatusText>
      <StatusText>1개 항목 선택함</StatusText>
      <ViewButtons>
        <PlainButton aria-label="Details"><svg width="16" height="16" viewBox="0 0 16 16"><rect width="16" height="16" rx="1" fill="#b0b0b0" /><path d="M2 3.500h12M2 6.500h12M2 9.500h12M2 12.500h12" stroke="#000" /></svg></PlainButton>
        <PlainButton aria-label="Large icons"><svg width="16" height="16" viewBox="0 0 16 16"><rect width="16" height="16" rx="1" fill="#b0b0b0" /><path d="M2.500 2.500h11v9h-11z" fill="#fff" stroke="#000" /><path d="M2 13.500h12" stroke="#000" /></svg></PlainButton>
      </ViewButtons>
    </StatusBar>
    <ContextMenu>
      <MenuItem $bold>열기(O)</MenuItem>
      <MenuItem>새 창에서 열기(E)</MenuItem>
      <MenuItem>즐겨찾기에 고정</MenuItem>
      <MenuItem $active>원격 데스크톱 연결</MenuItem>
      <MenuItem>시작 화면에 고정(P)</MenuItem>
      <hr />
      <MenuItem>바로 가기 만들기(S)</MenuItem>
    </ContextMenu>
  </Explorer>
)

const App = () => (
  <>
    <GlobalStyle />
    <Browser>
      <ChromeBars />
      <Viewport>
        <Page>
          <NavBar>
            {menu.map((item, i) => <NavLink key={item} href={`#${item.toLowerCase()}`} $active={i === 0}>{item}</NavLink>)}
            <NavIcons />
          </NavBar>
          <Columns>
            <System />
            <Shares />
            <Cache />
          </Columns>
          <Footer>
            <ArrayState><FaPlayCircle size={12} />Array Started</ArrayState>
            <Copyright>Unraid® webGui ©2022, Lime Technology, Inc. <a href="#manual"><FaBook size={12} />manual</a></Copyright>
          </Footer>
        </Page>
        <ScrollTrack><ScrollThumb /></ScrollTrack>
        <BackToTop href="#top" aria-label="Back to top"><FaArrowCircleUp size={24} /></BackToTop>
      </Viewport>
      <ExplorerWindow />
    </Browser>
  </>
)

export default App
